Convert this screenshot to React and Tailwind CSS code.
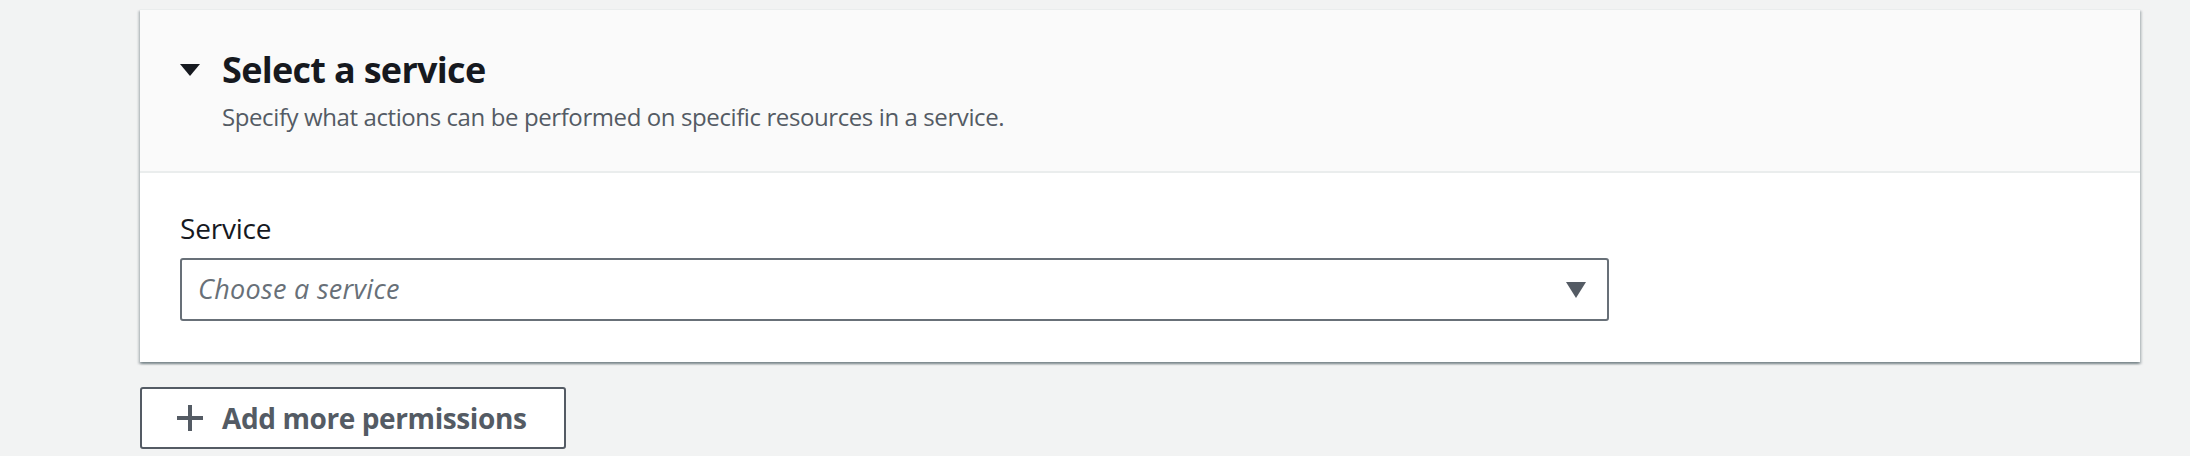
import { useState } from 'react';

const font = { fontFamily: '"Open Sans", "Noto Sans", Arial, sans-serif' };

const App = () => {
  const [open, setOpen] = useState(true);

  return (
    <div className="min-h-screen bg-[#f2f3f3] pt-[9px] pl-[140px]" style={font}>
      {/* Permission card */}
      <div className="w-[2000px] bg-white border-t border-[#eaeded] shadow-[0_2px_2px_0_rgba(0,28,36,0.3),2px_2px_2px_0_rgba(0,28,36,0.15),-2px_2px_2px_0_rgba(0,28,36,0.15)]">
        <div className="h-[163px] bg-[#fafafa] border-b-2 border-[#eaeded] pl-[40px] pt-[38px]">
          <div className="flex items-center">
            <button onClick={() => setOpen(!open)} className="w-[20px] h-[44px] flex items-center">
              <svg width="20" height="12" viewBox="0 0 20 12">
                <path d="M0 0 H20 L10 12 Z" fill="#16191f" />
              </svg>
            </button>
            <h2 className="ml-[22px] text-[36px] leading-[44px] font-bold text-[#16191f] tracking-[-0.7px]">Select a service</h2>
          </div>
          <p className="ml-[42px] mt-[9px] text-[24px] leading-[32px] text-[#545b64] tracking-[-0.4px]">
            Specify what actions can be performed on specific resources in a service.
          </p>
        </div>

        <div className="pl-[40px] pt-[37px] pb-[41px]">
          <label className="block text-[28px] leading-[36px] text-[#16191f] tracking-[-0.2px]">Service</label>
          <div className="mt-[12px] w-[1429px] h-[63px] border-2 border-[#687078] rounded-[3px] bg-white flex items-center justify-between pl-[16px] pr-[21px]">
            <span className="italic text-[27px] text-[#687078] tracking-[0.3px]">Choose a service</span>
            <svg width="20" height="16" viewBox="0 0 20 16">
              <path d="M0 0 H20 L10 16 Z" fill="#545b64" />
            </svg>
          </div>
        </div>
      </div>

      {/* Add more permissions */}
      <button className="mt-[25px] w-[426px] h-[62px] border-2 border-[#545b64] rounded-[3px] bg-white flex items-center pl-[34px]">
        <svg width="28" height="28" viewBox="0 0 28 28">
          <path d="M14 1 V27 M1 14 H27" stroke="#545b64" strokeWidth="4" />
        </svg>
        <span className="ml-[18px] text-[28px] font-bold text-[#545b64] tracking-[-0.4px]">Add more permissions</span>
      </button>
    </div>
  );
};

export default App;
